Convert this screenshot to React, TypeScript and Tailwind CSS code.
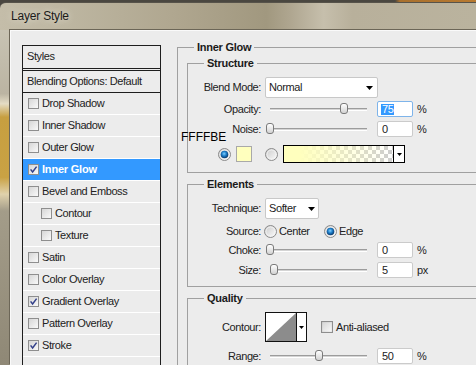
// App.tsx
import React, { useId } from "react";

type StyleRow = {
  label: string;
  checked?: boolean;
  selected?: boolean;
  indent?: boolean;
};

const styleRows: StyleRow[] = [
  { label: "Drop Shadow" },
  { label: "Inner Shadow" },
  { label: "Outer Glow" },
  { label: "Inner Glow", checked: true, selected: true },
  { label: "Bevel and Emboss" },
  { label: "Contour", indent: true },
  { label: "Texture", indent: true },
  { label: "Satin" },
  { label: "Color Overlay" },
  { label: "Gradient Overlay", checked: true },
  { label: "Pattern Overlay" },
  { label: "Stroke", checked: true },
  { label: "" },
];

const useSvgId = () => useId().replace(/[^a-zA-Z0-9]/g, "");

const CheckBox = ({ checked, size = 11 }: { checked?: boolean; size?: number }) => {
  const id = useSvgId();
  return (
    <svg width={size} height={size} viewBox="0 0 11 11" className="shrink-0">
      <defs>
        <linearGradient id={id + "g"} x1="0" y1="0" x2="1" y2="1">
          <stop offset="0" stopColor="#d4d4d4" />
          <stop offset="1" stopColor="#fbfbfb" />
        </linearGradient>
      </defs>
      <rect x="0.5" y="0.5" width="10" height="10" fill={`url(#${id}g)`} stroke="#8e8e8e" />
      {checked && (
        <path d="M2.6 5.4 L4.6 8 L8.6 2.6" fill="none" stroke="#33408a" strokeWidth="1.5" />
      )}
    </svg>
  );
};

const Radio = ({ on }: { on?: boolean }) => {
  const id = useSvgId();
  return (
    <svg width="13" height="13" viewBox="0 0 13 13" className="shrink-0">
      <defs>
        <linearGradient id={id + "a"} x1="0" y1="0" x2="1" y2="1">
          <stop offset="0" stopColor="#c9c9c9" />
          <stop offset="1" stopColor="#fdfdfd" />
        </linearGradient>
        <radialGradient id={id + "b"} cx="0.45" cy="0.4" r="0.6">
          <stop offset="0" stopColor="#7fd0ff" />
          <stop offset="0.5" stopColor="#1c7cc8" />
          <stop offset="1" stopColor="#0a3566" />
        </radialGradient>
      </defs>
      <circle cx="6.5" cy="6.5" r="6" fill={`url(#${id}a)`} stroke="#8a8a8a" />
      <circle cx="6.5" cy="6.5" r="4.5" fill="none" stroke="#f4f4f4" strokeWidth="0.8" />
      {on && <circle cx="6.5" cy="6.5" r="3.8" fill={`url(#${id}b)`} />}
    </svg>
  );
};

const DownArrow = () => (
  <svg width="7" height="4" viewBox="0 0 7 4" className="shrink-0">
    <path d="M0 0H7L3.5 4Z" fill="#000" />
  </svg>
);

const SmallArrow = () => (
  <svg width="5" height="3" viewBox="0 0 5 3" className="shrink-0">
    <path d="M0 0H5L2.5 3Z" fill="#000" />
  </svg>
);

const GroupHead = ({ title }: { title: string }) => (
  <div className="flex h-[14px]">
    <div className="mt-[7px] w-[17px] border-t border-l border-[#a0a0a0]" />
    <span className="px-[3px] text-[11px] leading-[14px] font-bold tracking-[-0.25px] text-[#1a1a1a]">
      {title}
    </span>
    <div className="mt-[7px] flex-1 border-t border-[#a0a0a0]" />
  </div>
);

const Label = ({ text }: { text: string }) => (
  <span className="w-[73px] shrink-0 text-right">{text}</span>
);

const Slider = ({ frac }: { frac: number }) => (
  <div className="relative ml-[9px] flex h-[16px] w-[97px] items-center">
    <div className="h-[3px] w-full border-t border-b border-t-[#9c9c9c] border-b-white bg-[#d4d4d4]" />
    <div
      className="absolute top-[2px] h-[11px] w-[8px] rounded-[3px] border border-[#7a7a7a] bg-[linear-gradient(180deg,#ffffff,#d2d2d2)]"
      style={{ left: frac * 97 - 4 }}
    />
  </div>
);

const NumBox = ({ value, focused }: { value: string; focused?: boolean }) => (
  <div
    className={
      focused
        ? "ml-[10px] flex h-[16px] w-[36px] items-center rounded-[2px] border border-[#7eb4ea] bg-white pl-[3px]"
        : "ml-[10px] flex h-[16px] w-[36px] items-center rounded-[2px] border border-[#cbcbcb] bg-white pl-[4px]"
    }
  >
    {focused ? (
      <span className="bg-[#3399ff] px-[1px] leading-[11px] text-white">{value}</span>
    ) : (
      <span>{value}</span>
    )}
  </div>
);

const SliderRow = ({
  label,
  frac,
  value,
  unit,
  focused,
  className,
}: {
  label: string;
  frac: number;
  value: string;
  unit: string;
  focused?: boolean;
  className: string;
}) => (
  <div className={`flex h-[16px] items-center ${className}`}>
    <Label text={label} />
    <Slider frac={frac} />
    <NumBox value={value} focused={focused} />
    <span className="ml-[4px]">{unit}</span>
  </div>
);

const App: React.FC = () => {
  return (
    <div className="relative flex h-[365px] w-[476px] flex-col overflow-hidden bg-[linear-gradient(90deg,#4a4740_0%,#4a4740_83%,#a8702e_84%,#b87a30_100%)] font-['Liberation_Sans',Arial,sans-serif] text-[11px] leading-[13px] text-[#222]">
      {/* title bar */}
      <div className="mt-[2px] flex h-[28px] shrink-0 items-center rounded-tl-[6px] border-t border-[#57534a] bg-[linear-gradient(90deg,#c4bda9_0%,#bdb6a1_14%,#b0a790_36%,#a1987f_56%,#afa690_61%,#c6bfac_68%,#b8b09b_74%,#bab39e_100%)] pl-[11px]">
        <span className="text-[12px] tracking-[-0.2px] text-[#1b1b1b] [text-shadow:0_0_6px_#e8e4d8]">
          Layer Style
        </span>
      </div>

      <div className="flex min-h-0 flex-1">
        {/* glass frame */}
        <div className="w-[10px] shrink-0 bg-[linear-gradient(180deg,#c8c3b3_0%,#bbb4a2_19%,#e4dcc4_22%,#c79f40_26%,#c9a244_44%,#e0d2ac_49%,#a39c89_54%,#8f8876_100%)]" />

        {/* client area */}
        <div className="flex flex-1 border-t border-l border-[#fafafa] bg-[#ececec] pt-[9px] pl-[11px] shadow-[-1px_-1px_0_#6c6657]">
          {/* styles list */}
          <div className="mt-[5px] h-[330px] w-[139px] shrink-0 border border-[#1e1e1e]">
            <div className="flex h-[25px] items-center border-b-[3px] border-double border-[#1e1e1e] pb-[1px] pl-[4px] tracking-[-0.4px]">
              Styles
            </div>
            <div className="flex h-[22px] items-center border-b border-[#1e1e1e] pl-[4px] tracking-[-0.4px]">
              Blending Options: Default
            </div>
            {styleRows.map((row, i) => (
              <div
                key={i}
                className={
                  row.selected
                    ? "flex h-[22px] items-center gap-[3px] border-b border-white bg-[#3399ff] pl-[5px] font-bold tracking-[-0.2px] text-white"
                    : row.indent
                    ? "flex h-[22px] items-center gap-[3px] border-b border-white pl-[18px] tracking-[-0.4px]"
                    : "flex h-[22px] items-center gap-[3px] border-b border-white pl-[5px] tracking-[-0.4px]"
                }
              >
                {row.label && <CheckBox checked={row.checked} />}
                <span>{row.label}</span>
              </div>
            ))}
          </div>

          {/* inner glow settings */}
          <div className="ml-[16px] w-[330px] shrink-0 tracking-[-0.4px]">
            <GroupHead title="Inner Glow" />
            <div className="h-[330px] border-l border-[#a0a0a0] pt-[2px] pl-[9px]">
              {/* Structure */}
              <GroupHead title="Structure" />
              <div className="border-b border-l border-[#a0a0a0] pt-[7px] pb-[9px]">
                <div className="flex h-[21px] items-center">
                  <Label text="Blend Mode:" />
                  <div className="ml-[4px] flex h-[21px] w-[113px] items-center justify-between rounded-[2px] border border-[#c8c8c8] bg-white pr-[4px] pl-[3px]">
                    <span>Normal</span>
                    <DownArrow />
                  </div>
                </div>
                <SliderRow className="mt-[3px]" label="Opacity:" frac={0.76} value="75" unit="%" focused />
                <SliderRow className="mt-[4px]" label="Noise:" frac={0} value="0" unit="%" />
                <div className="mt-[8px] flex h-[18px] items-center">
                  <div className="ml-[30px]">
                    <Radio on />
                  </div>
                  <div className="ml-[5px] h-[16px] w-[16px] border border-[#a9a9a9] bg-[#ffffbe]" />
                  <div className="ml-[13px]">
                    <Radio />
                  </div>
                  <div className="ml-[5px] flex h-[18px] w-[122px] border border-black">
                    <div className="flex-1 bg-[conic-gradient(#cdcdcd_25%,#ffffff_0_50%,#cdcdcd_0_75%,#ffffff_0)] bg-[length:8px_8px]">
                      <div className="h-full w-full bg-[linear-gradient(90deg,#ffffbe_0%,#ffffbe_15%,rgba(255,255,190,0)_100%)]" />
                    </div>
                    <div className="flex w-[11px] items-center justify-center border-l border-black bg-white">
                      <SmallArrow />
                    </div>
                  </div>
                </div>
              </div>

              {/* Elements */}
              <div className="mt-[4px]">
                <GroupHead title="Elements" />
              </div>
              <div className="border-b border-l border-[#a0a0a0] pt-[7px] pb-[8px]">
                <div className="flex h-[21px] items-center">
                  <Label text="Technique:" />
                  <div className="ml-[4px] flex h-[21px] w-[54px] items-center justify-between rounded-[2px] border border-[#c8c8c8] bg-white pr-[3px] pl-[3px]">
                    <span>Softer</span>
                    <DownArrow />
                  </div>
                </div>
                <div className="mt-[5px] flex h-[14px] items-center">
                  <Label text="Source:" />
                  <div className="ml-[3px] flex w-[60px] items-center gap-[2px]">
                    <Radio />
                    <span>Center</span>
                  </div>
                  <div className="flex items-center gap-[2px]">
                    <Radio on />
                    <span>Edge</span>
                  </div>
                </div>
                <SliderRow className="mt-[4px]" label="Choke:" frac={0} value="0" unit="%" />
                <SliderRow className="mt-[4px]" label="Size:" frac={0.045} value="5" unit="px" />
              </div>

              {/* Quality */}
              <div className="mt-[4px]">
                <GroupHead title="Quality" />
              </div>
              <div className="h-[80px] border-l border-[#a0a0a0] pt-[7px]">
                <div className="flex h-[30px] items-center">
                  <Label text="Contour:" />
                  <div className="ml-[4px] flex h-[30px] w-[42px] border border-[#111] bg-white">
                    <svg width="30" height="28" viewBox="0 0 30 28" className="shrink-0">
                      <path d="M0 28 L30 0 L30 28 Z" fill="#8c8c8c" />
                    </svg>
                    <div className="flex flex-1 items-center justify-center border-l border-[#111]">
                      <SmallArrow />
                    </div>
                  </div>
                  <div className="ml-[14px]">
                    <CheckBox size={12} />
                  </div>
                  <span className="ml-[3px]">Anti-aliased</span>
                </div>
                <SliderRow className="mt-[6px]" label="Range:" frac={0.5} value="50" unit="%" />
              </div>
            </div>
          </div>
        </div>
      </div>

      {/* annotation over the dialog */}
      <span className="absolute top-[130px] left-[181px] text-[12px] leading-[14px] tracking-normal text-black">
        FFFFBE
      </span>
    </div>
  );
};

export default App;
